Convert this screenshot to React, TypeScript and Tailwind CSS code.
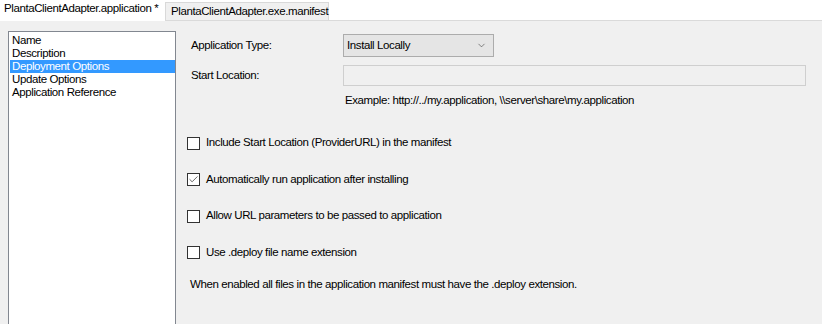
import { Check, ChevronDown } from "lucide-react";

const SECTIONS = [
  "Name",
  "Description",
  "Deployment Options",
  "Update Options",
  "Application Reference",
];

function CheckRow({ label, checked }: { label: string; checked?: boolean }) {
  return (
    <div className="flex items-center h-[13px]">
      <div className="w-[13px] h-[13px] border border-[#333] bg-white flex items-center justify-center shrink-0">
        {checked && <Check size={11} strokeWidth={1.75} className="text-[#444]" />}
      </div>
      <span className="ml-[6px] leading-none">{label}</span>
    </div>
  );
}

export default function App() {
  return (
    <div
      className="w-[822px] h-[324px] bg-[#f0f0f0] text-[11.5px] tracking-[-0.4px] text-black overflow-hidden flex flex-col"
      style={{ fontFamily: '"Liberation Sans", Arial, sans-serif' }}
    >
      {/* Tab strip */}
      <div className="h-[21px] bg-white flex items-end border-b border-[#dadada] shrink-0">
        <div className="h-[21px] w-[165px] bg-white pl-[4px] pt-[3px] leading-none -mb-px whitespace-nowrap">
          PlantaClientAdapter.application *
        </div>
        <div className="h-[18px] w-[164px] bg-[#f0f0f0] border border-[#d9d9d9] border-b-0 pl-[5px] pt-[3px] leading-none whitespace-nowrap">
          PlantaClientAdapter.exe.manifest
        </div>
      </div>

      <div className="flex flex-1 pt-[10px] pl-[8px]">
        {/* Section list */}
        <div className="w-[168px] border border-[#828790] border-b-0 bg-white pt-[2px] pl-px shrink-0">
          {SECTIONS.map((s) => (
            <div
              key={s}
              className={
                s === "Deployment Options"
                  ? "h-[13px] leading-[13px] pl-[2px] bg-[#3399ff] text-white"
                  : "h-[13px] leading-[13px] pl-[2px]"
              }
            >
              {s}
            </div>
          ))}
        </div>

        {/* Settings panel */}
        <div className="flex-1 pl-[14px] pt-[3px]">
          <div className="flex items-center h-[23px]">
            <span className="w-[153px] pl-px">Application Type:</span>
            <div className="w-[151px] h-[23px] bg-[#e5e5e5] border border-[#acacac] flex items-center justify-between pl-[3px] pr-[6px]">
              <span>Install Locally</span>
              <ChevronDown size={11} strokeWidth={1.25} className="text-[#333]" />
            </div>
          </div>
          <div className="flex items-center h-[21px] mt-[8px]">
            <span className="w-[153px] pl-px">Start Location:</span>
            <div className="w-[463px] h-[21px] bg-[#f0f0f0] border border-[#cfcfcf]" />
          </div>
          <div className="pl-[155px] mt-[9px] leading-none">
            Example: http://../my.application, \\server\share\my.application
          </div>

          <div className="mt-[30px] -ml-[3px] flex flex-col gap-[23.5px]">
            <CheckRow label="Include Start Location (ProviderURL) in the manifest" />
            <CheckRow label="Automatically run application after installing" checked />
            <CheckRow label="Allow URL parameters to be passed to application" />
            <CheckRow label="Use .deploy file name extension" />
          </div>

          <div className="mt-[20px] leading-none">
            When enabled all files in the application manifest must have the .deploy extension.
          </div>
        </div>
      </div>
    </div>
  );
}
